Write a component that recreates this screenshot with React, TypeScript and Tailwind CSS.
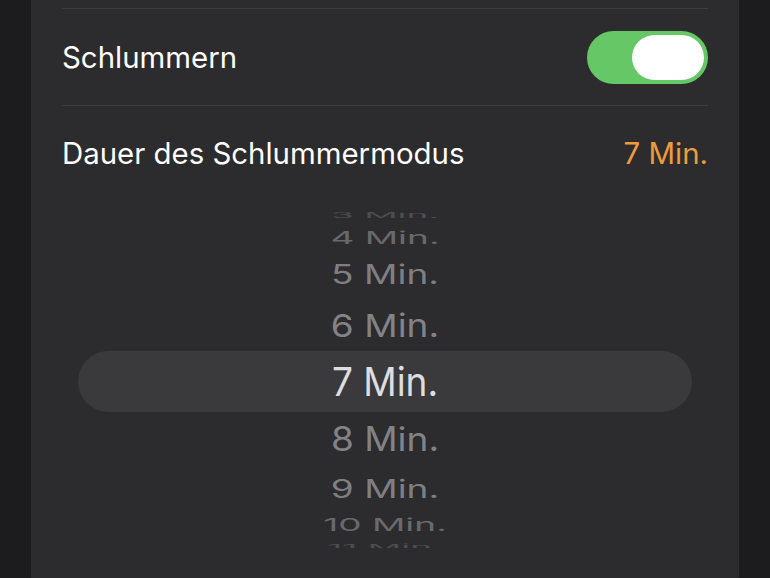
import * as React from "react";

type WheelRow = {
  label: string;
  row: string;
  text: string;
};

// rows of the duration wheel, squashed towards the edges like a drum
const wheelRows: WheelRow[] = [
  { label: "3 Min.", row: "-mt-[8px] h-[22px]", text: "scale-y-[0.2] text-[#4d4d51]" },
  { label: "4 Min.", row: "h-[29px]", text: "-translate-y-[3px] scale-y-[0.47] text-[#69696d]" },
  { label: "5 Min.", row: "h-[44px]", text: "-translate-y-[3px] scale-y-[0.72] text-[#7f7f83]" },
  { label: "6 Min.", row: "h-[52px]", text: "scale-y-[0.86] text-[#838387]" },
  { label: "8 Min.", row: "h-[52px]", text: "scale-y-[0.9] text-[#838387]" },
  { label: "9 Min.", row: "h-[43px]", text: "translate-y-[3px] scale-y-[0.68] text-[#7f7f83]" },
  { label: "10 Min.", row: "h-[29px]", text: "translate-y-[3px] scale-y-[0.47] text-[#69696d]" },
  { label: "11 Min.", row: "h-[22px]", text: "scale-y-[0.2] text-[#4d4d51]" },
];

const Toggle: React.FC<{ on: boolean }> = ({ on }) => (
  <div
    className={
      on
        ? "flex h-[53px] w-[121px] items-center justify-end rounded-full bg-[#65c766] pr-[4px]"
        : "flex h-[53px] w-[121px] items-center justify-start rounded-full bg-[#39393d] pl-[4px]"
    }
  >
    <div className="h-[45px] w-[72px] rounded-full bg-white" />
  </div>
);

const WheelItem: React.FC<{ item: WheelRow }> = ({ item }) => (
  <div className={`flex items-center justify-center ${item.row}`}>
    <span className={`block text-[37px] leading-none ${item.text}`}>{item.label}</span>
  </div>
);

export default function App() {
  const [snooze, setSnooze] = React.useState(true);

  return (
    <div className="h-[578px] w-[770px] overflow-hidden bg-[#1c1c1e] font-['Inter',sans-serif] text-white">
      <div className="mx-[31px] h-[590px] rounded-b-[14px] bg-[#2c2c2e] px-[31px]">
        <div className="h-[8px]" />
        <div className="h-px bg-[#3d3d40]" />

        <div className="flex h-[96px] items-center justify-between" onClick={() => setSnooze(!snooze)}>
          <span className="translate-y-[1px] text-[29.4px] leading-none">Schlummern</span>
          <Toggle on={snooze} />
        </div>
        <div className="h-px bg-[#3d3d40]" />

        <div className="flex h-[96px] items-center justify-between">
          <span className="text-[29.4px] leading-none">Dauer des Schlummermodus</span>
          <span className="text-[29.4px] leading-none text-[#ef9b3d]">7 Min.</span>
        </div>

        <div className="h-[10px]" />
        <div className="mx-[16px] h-[336px] overflow-hidden">
          {wheelRows.slice(0, 4).map((item) => (
            <WheelItem key={item.label} item={item} />
          ))}
          <div className="flex h-[61px] items-center justify-center rounded-full bg-[#3a3a3c]">
            <span className="block text-[37px] leading-none text-[#dedee0] scale-y-[1.08]">7 Min.</span>
          </div>
          {wheelRows.slice(4).map((item) => (
            <WheelItem key={item.label} item={item} />
          ))}
        </div>
      </div>
    </div>
  );
}
